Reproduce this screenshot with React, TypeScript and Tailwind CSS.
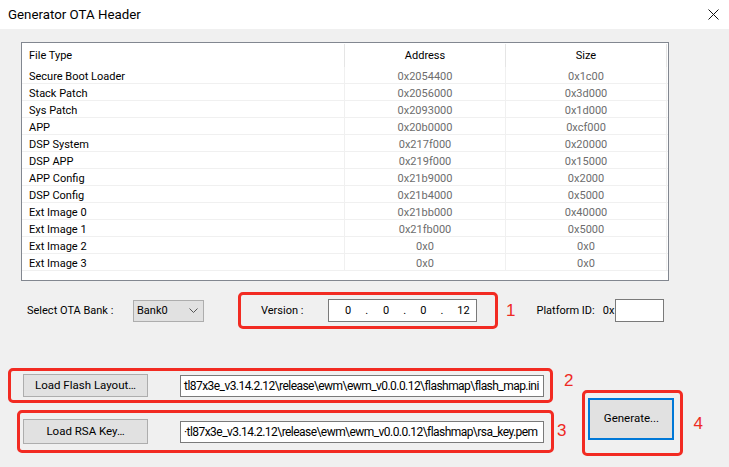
import React from 'react';

const rows = [
  ['Secure Boot Loader', '0x2054400', '0x1c00'],
  ['Stack Patch', '0x2056000', '0x3d000'],
  ['Sys Patch', '0x2093000', '0x1d000'],
  ['APP', '0x20b0000', '0xcf000'],
  ['DSP System', '0x217f000', '0x20000'],
  ['DSP APP', '0x219f000', '0x15000'],
  ['APP Config', '0x21b9000', '0x2000'],
  ['DSP Config', '0x21b4000', '0x5000'],
  ['Ext Image 0', '0x21bb000', '0x40000'],
  ['Ext Image 1', '0x21fb000', '0x5000'],
  ['Ext Image 2', '0x0', '0x0'],
  ['Ext Image 3', '0x0', '0x0'],
];

const FileField = ({ path }: { path: string }) => (
  <div className="w-[364px] h-[22px] bg-white border border-[#7a7a7a] flex items-center pl-[3px] pt-[1px] text-[12px] tracking-[-0.55px] text-black whitespace-nowrap">
    <span>{path}</span>
  </div>
);

const Mark = ({ n, className }: { n: string; className: string }) => (
  <span className={`text-[17px] leading-none text-[#ee2a24] font-['Liberation_Sans'] ${className}`}>{n}</span>
);

const App = () => {
  return (
    <div className="w-[729px] h-[467px] bg-[#f0f0f0] font-['Roboto',sans-serif] text-[11px] text-black overflow-hidden">
      {/* title bar */}
      <div className="h-[29px] bg-white flex items-center justify-between pl-[8px] pr-[8px]">
        <span className="text-[13.3px]">Generator OTA Header</span>
        <svg width="11" height="11" viewBox="0 0 11 11" className="mr-[2px]">
          <path d="M0.5 0.5 L10.5 10.5 M10.5 0.5 L0.5 10.5" stroke="#111" strokeWidth="1" />
        </svg>
      </div>

      {/* file table */}
      <div className="ml-[21px] mt-[13px] w-[648px] h-[239px] border border-[#828790] bg-white">
        <div className="flex h-[24px] items-center">
          <div className="w-[323px] h-[23px] border-r border-[#e5e5e5] pl-[7px] pt-[3px] flex items-center">File Type</div>
          <div className="w-[161px] h-[23px] border-r border-[#e5e5e5] pt-[3px] flex items-center justify-center">Address</div>
          <div className="w-[161px] h-[23px] border-r border-[#e5e5e5] pt-[3px] flex items-center justify-center">Size</div>
        </div>
        {rows.map(([t, a, s]) => (
          <div key={t} className="flex h-[17px] border-b border-[#f0f0f0]">
            <div className="w-[323px] border-r border-[#f0f0f0] pl-[7px] pt-[5px] flex items-center">{t}</div>
            <div className="w-[161px] border-r border-[#f0f0f0] pt-[5px] flex items-center justify-center text-[#6d6d6d]">{a}</div>
            <div className="w-[161px] border-r border-[#f0f0f0] pt-[5px] flex items-center justify-center text-[#6d6d6d]">{s}</div>
          </div>
        ))}
      </div>

      {/* bank / version / platform */}
      <div className="mt-[11px] h-[37px] flex items-center">
        <span className="ml-[27px] w-[106px] pt-[2px]">Select OTA Bank :</span>
        <div className="w-[71px] h-[22px] bg-[#e1e1e1] border border-[#adadad] flex items-center justify-between pl-[3px] pr-[5px] pt-[1px]">
          <span>Bank0</span>
          <svg width="9" height="6" viewBox="0 0 9 6">
            <path d="M0.5 0.5 L4.5 4.5 L8.5 0.5" fill="none" stroke="#555" strokeWidth="1" />
          </svg>
        </div>
        <div className="ml-[34px] w-[260px] h-[37px] border-[3px] border-[#f22b22] rounded-[5px] flex items-center">
          <span className="ml-[20px] w-[67px] pt-[2px]">Version :</span>
          <div className="w-[149px] h-[23px] bg-white border border-[#7a7a7a] flex items-center pt-[1px] text-[11px]">
            <span className="ml-[16px]">0</span>
            <span className="ml-[14px]">.</span>
            <span className="ml-[15px]">0</span>
            <span className="ml-[14px]">.</span>
            <span className="ml-[14px]">0</span>
            <span className="ml-[14px]">.</span>
            <span className="ml-[14px]">12</span>
          </div>
        </div>
        <Mark n="1" className="ml-[8px]" />
        <span className="ml-[21px] pt-[2px]">Platform ID:</span>
        <span className="ml-[8px] pt-[2px]">0x</span>
        <div className="ml-[1px] w-[49px] h-[23px] bg-white border border-[#7a7a7a]" />
      </div>

      {/* load + generate */}
      <div className="mt-[39px] flex items-start">
        <div className="flex flex-col">
          <div className="flex items-start">
            <div className="ml-[8px] w-[545px] h-[35px] border-[3px] border-[#f22b22] rounded-[5px] flex items-center">
              <button className="ml-[12px] w-[125px] h-[23px] bg-[#e1e1e1] border border-[#adadad] pt-[1px] text-[11.5px]">Load Flash Layout…</button>
              <div className="ml-[32px]">
                <FileField path="tl87x3e_v3.14.2.12\release\ewm\ewm_v0.0.0.12\flashmap\flash_map.ini" />
              </div>
            </div>
            <Mark n="2" className="ml-[11px] mt-[4px]" />
          </div>
          <div className="flex items-start mt-[7px]">
            <div className="ml-[17px] w-[537px] h-[43px] border-[3px] border-[#f22b22] rounded-[5px] flex items-center">
              <button className="ml-[3px] w-[125px] h-[25px] bg-[#e1e1e1] border border-[#adadad] pt-[1px] text-[11.5px]">Load RSA Key…</button>
              <div className="ml-[32px]">
                <FileField path="·tl87x3e_v3.14.2.12\release\ewm\ewm_v0.0.0.12\flashmap\rsa_key.pem" />
              </div>
            </div>
            <Mark n="3" className="ml-[3px] mt-[12px]" />
          </div>
        </div>
        <div className="ml-[9px] mt-[22px] flex items-center">
          <div className="w-[101px] h-[66px] border-[3px] border-[#f22b22] rounded-[5px] pl-[3px] pt-[5px]">
            <button className="w-[86px] h-[42px] bg-[#e1e1e1] border-2 border-[#0078d7] text-[11.5px]">Generate...</button>
          </div>
          <Mark n="4" className="ml-[10px]" />
        </div>
      </div>
    </div>
  );
};

export default App;
